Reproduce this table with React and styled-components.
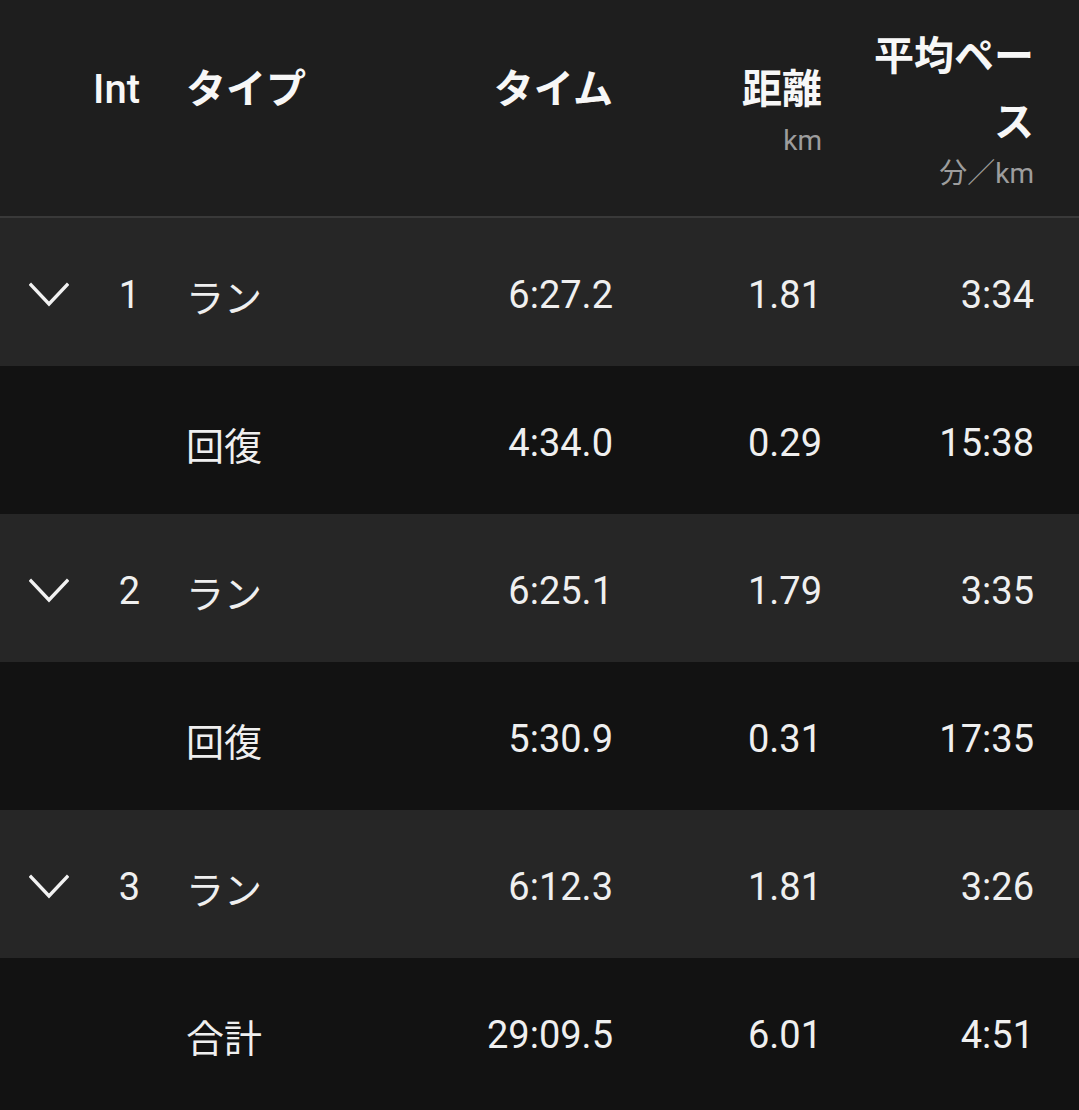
import React from "react";
import styled, { createGlobalStyle } from "styled-components";

const GlobalStyle = createGlobalStyle`
  html, body {
    margin: 0;
    padding: 0;
    background: #121212;
  }
  body {
    font-family: Roboto, "Noto Sans CJK JP", sans-serif;
    color: #f2f2f2;
  }
`;

const laps = [
  { int: 1, type: "ラン", time: "6:27.2", dist: "1.81", pace: "3:34", main: true },
  { type: "回復", time: "4:34.0", dist: "0.29", pace: "15:38" },
  { int: 2, type: "ラン", time: "6:25.1", dist: "1.79", pace: "3:35", main: true },
  { type: "回復", time: "5:30.9", dist: "0.31", pace: "17:35" },
  { int: 3, type: "ラン", time: "6:12.3", dist: "1.81", pace: "3:26", main: true },
  { type: "合計", time: "29:09.5", dist: "6.01", pace: "4:51" },
];

export default function App() {
  return (
    <>
      <GlobalStyle />
      <Table>
        <HeaderRow>
          <span />
          <HeadCell $align="right">
            <HeadTitle $latin>Int</HeadTitle>
            <HeadSub />
          </HeadCell>
          <HeadCell $pad>
            <HeadTitle>タイプ</HeadTitle>
            <HeadSub />
          </HeadCell>
          <HeadCell $align="right">
            <HeadTitle>タイム</HeadTitle>
            <HeadSub />
          </HeadCell>
          <HeadCell $align="right">
            <HeadTitle>距離</HeadTitle>
            <HeadSub>km</HeadSub>
          </HeadCell>
          <HeadCell $align="right">
            <HeadTitle $narrow>平均ペース</HeadTitle>
            <HeadSub>分／km</HeadSub>
          </HeadCell>
        </HeaderRow>
        {laps.map((lap, i) => (
          <Row key={i} $main={lap.main}>
            <ChevronCell>{lap.main && <Chevron />}</ChevronCell>
            <Cell $align="right">{lap.int}</Cell>
            <Cell $pad>{lap.type}</Cell>
            <Cell $align="right">{lap.time}</Cell>
            <Cell $align="right">{lap.dist}</Cell>
            <Cell $align="right">{lap.pace}</Cell>
          </Row>
        ))}
      </Table>
    </>
  );
}

const Chevron = () => (
  <svg width="40" height="26" viewBox="0 0 40 26" fill="none">
    <polyline
      points="2,3 20,22 38,3"
      stroke="#f2f2f2"
      strokeWidth="3.4"
      strokeLinecap="square"
      strokeLinejoin="miter"
    />
  </svg>
);

const cols = `96px 44px 273px 200px 209px 212px`;

const Table = styled.div`
  width: 100%;
  min-height: 1110px;
  background: #121212;
`;

const HeaderRow = styled.div`
  display: grid;
  grid-template-columns: ${cols};
  padding-right: 45px;
  height: 216px;
  background: #1e1e1e;
  border-bottom: 2px solid #393939;
  align-items: center;
`;

const HeadCell = styled.div`
  display: flex;
  flex-direction: column;
  align-items: ${(p) => (p.$align === "right" ? "flex-end" : "flex-start")};
  padding-left: ${(p) => (p.$pad ? "46px" : "0")};
`;

const HeadTitle = styled.div`
  font-size: 40px;
  line-height: 66px;
  font-weight: ${(p) => (p.$latin ? 500 : 700)};
  color: #f7f7f7;
  text-align: right;
  max-width: ${(p) => (p.$narrow ? "180px" : "none")};
`;

const HeadSub = styled.div`
  font-size: 28px;
  line-height: 36px;
  height: 36px;
  color: #9d9d9d;
`;

const Row = styled.div`
  display: grid;
  grid-template-columns: ${cols};
  padding-right: 45px;
  height: 148px;
  align-items: center;
  background: ${(p) => (p.$main ? "#262626" : "#121212")};
`;

const ChevronCell = styled.div`
  display: flex;
  justify-content: center;
  padding-left: 2px;
  padding-top: 6px;
`;

const Cell = styled.div`
  font-size: 38px;
  padding-top: 6px;
  text-align: ${(p) => (p.$align === "right" ? "right" : "left")};
  padding-left: ${(p) => (p.$pad ? "46px" : "0")};
  color: #efefef;
`;
